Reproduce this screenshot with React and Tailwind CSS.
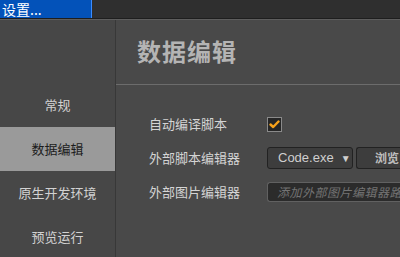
export default function App() {
  const navItems = ["常规", "数据编辑", "原生开发环境", "预览运行"];
  const active = "数据编辑";

  return (
    <div className="w-[400px] h-[257px] overflow-hidden bg-[#474747] flex flex-col font-['Noto_Sans_CJK_SC','Noto_Sans',sans-serif]">
      {/* title bar */}
      <div className="flex h-[18px] shrink-0">
        <div className="w-[92px] bg-[#0352b9] border-r border-[#3b8cff] text-white text-[14px] leading-[18px] pl-[2px] whitespace-nowrap">
          设置...
        </div>
        <div className="flex-1 bg-[#2f2f2f]" />
      </div>
      <div className="h-[1px] bg-[#1e1e1e] shrink-0" />
      <div className="h-[1px] bg-[#5e5e5e] shrink-0" />

      <div className="flex flex-1 min-h-0">
        {/* sidebar */}
        <div className="w-[116px] shrink-0 border-r border-[#383838] pt-[63px] flex flex-col">
          {navItems.map((item) => (
            <div
              key={item}
              className={`h-[44px] shrink-0 flex items-center justify-center text-[13px] ${
                item === active ? "bg-[#9a9a9a] text-[#1c1c1c]" : "text-[#d2d2d2]"
              }`}
            >
              {item}
            </div>
          ))}
        </div>

        {/* content */}
        <div className="flex-1 bg-[#494949] flex flex-col">
          <div className="h-[64px] shrink-0 flex items-center pl-[21px] pb-[2px]">
            <h1 className="text-[24px] font-bold text-[#b4b4b4] tracking-[1px]">数据编辑</h1>
          </div>
          <div className="h-[1px] bg-[#6c6c6c] shrink-0" />

          <div className="pt-[22px] pl-[33px] flex flex-col">
            <div className="h-[34px] flex items-center">
              <span className="w-[118px] text-[13px] text-[#d4d4d4]">自动编译脚本</span>
              <div className="w-[15px] h-[15px] bg-[#262626] border border-[#8a8a8a] flex items-center justify-center">
                <svg width="11" height="9" viewBox="0 0 11 9">
                  <path d="M1.5 4.5 L4.2 7 L9.5 1.5" fill="none" stroke="#f7a21b" strokeWidth="2.4" strokeLinecap="round" strokeLinejoin="round" />
                </svg>
              </div>
            </div>

            <div className="h-[34px] flex items-center">
              <span className="w-[118px] text-[13px] text-[#d4d4d4]">外部脚本编辑器</span>
              <div className="w-[86px] h-[22px] rounded-[3px] bg-[#3d3d3d] border border-[#222] flex items-center pl-[10px] text-[13px] text-[#cfcfcf] font-['Liberation_Sans',sans-serif]">
                Code.exe
                <span className="ml-[7px] text-[10px]">▼</span>
              </div>
              <div className="ml-[3px] w-[60px] h-[22px] rounded-l-[3px] bg-[#3d3d3d] border border-r-0 border-[#222] flex items-center pl-[18px] text-[12px] font-bold text-[#bdbdbd] whitespace-nowrap">
                浏览
              </div>
            </div>

            <div className="h-[34px] flex items-center">
              <span className="w-[118px] text-[13px] text-[#d4d4d4]">外部图片编辑器</span>
              <div className="flex-1 h-[20px] rounded-l-[3px] bg-[#2b2b2b] border border-r-0 border-[#616161] flex items-center pl-[9px] text-[12px] tracking-[0.5px] italic text-[#737373] whitespace-nowrap overflow-hidden">
                添加外部图片编辑器路径
              </div>
            </div>
          </div>
        </div>
      </div>
    </div>
  );
}
